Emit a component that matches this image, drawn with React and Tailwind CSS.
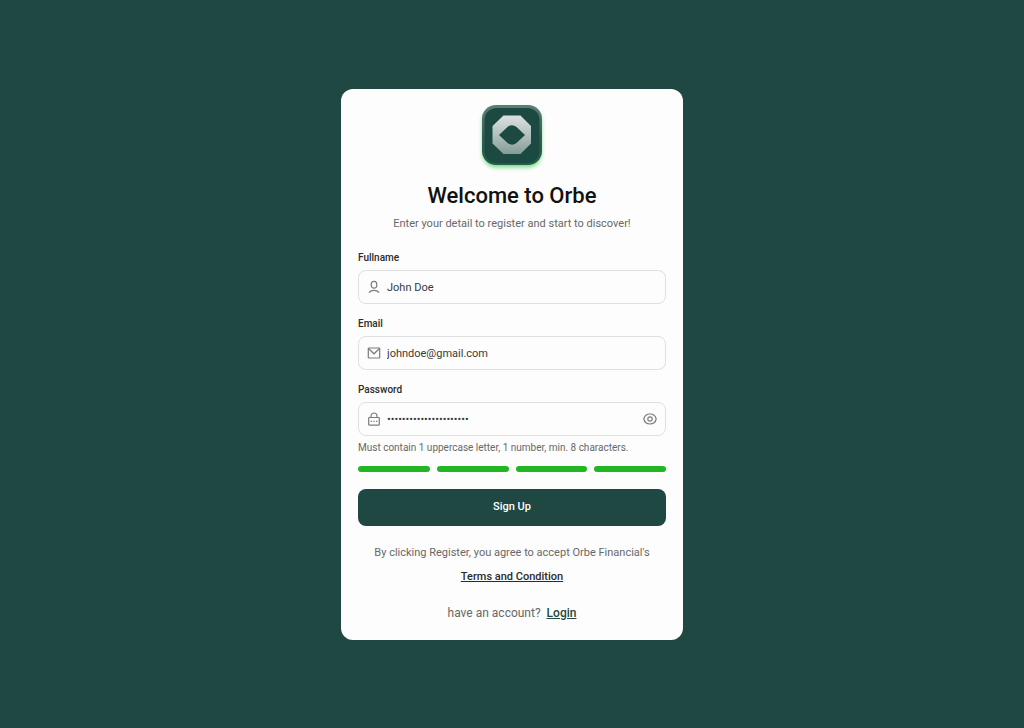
import { useState } from "react";

function Logo() {
  return (
    <svg width="80" height="80" viewBox="0 0 80 80" className="-m-[10px]" role="img" aria-label="Orbe">
      <defs>
        <linearGradient id="rim" x1="0" y1="0" x2="0" y2="1">
          <stop offset="0" stopColor="#5d7f78" />
          <stop offset="0.55" stopColor="#315c52" />
          <stop offset="1" stopColor="#215f43" />
        </linearGradient>
        <linearGradient id="ring" x1="0" y1="0" x2="0" y2="1">
          <stop offset="0" stopColor="#dce1e0" />
          <stop offset="0.5" stopColor="#b4c1be" />
          <stop offset="1" stopColor="#849c97" />
        </linearGradient>
        <filter id="glow" x="-30%" y="-30%" width="160%" height="160%">
          <feGaussianBlur stdDeviation="2" />
        </filter>
        <filter id="soft" x="-10%" y="-10%" width="120%" height="120%">
          <feGaussianBlur stdDeviation="0.6" />
        </filter>
      </defs>
      <rect x="10.500" y="13" width="59" height="59.500" rx="14" fill="#4fcf62" opacity="0.75" filter="url(#glow)" />
      <rect x="10" y="10" width="60" height="60" rx="14" fill="url(#rim)" />
      <rect x="12.500" y="13" width="55" height="55" rx="12" fill="#1f4842" filter="url(#soft)" />
      <path
        fill="url(#ring)"
        fillRule="evenodd"
        d="M31.500 20.500h17L59 31v17.500L48.500 59h-17L20.500 48.500V31ZM27 40l8.500-8q4.500-3.500 9 0l8.500 8-8.500 8q-4.500 3.500-9 0Z"
      />
    </svg>
  );
}

const iconProps = {
  width: 14,
  height: 14,
  viewBox: "0 0 14 14",
  fill: "none",
  stroke: "currentColor",
  strokeWidth: 1.2,
  className: "shrink-0",
  "aria-hidden": true,
};

function UserIcon() {
  return (
    <svg {...iconProps}>
      <path d="M7 1.300c1.700 0 2.800 1.200 2.800 2.900v.8C9.800 6.800 8.600 8.200 7 8.200S4.200 6.800 4.200 5v-.8C4.200 2.500 5.300 1.300 7 1.300Z" />
      <path d="M2 12.600c1-1.400 2.800-2.200 5-2.200s4 .8 5 2.200" />
    </svg>
  );
}

function MailIcon() {
  return (
    <svg {...iconProps}>
      <rect x="1.300" y="2" width="11.400" height="10" rx="0.500" />
      <path d="M1.500 2.500 7 7.800l5.500-5.300" />
    </svg>
  );
}

function LockIcon() {
  return (
    <svg {...iconProps}>
      <rect x="1.700" y="5.500" width="10.600" height="7.600" rx="0.500" />
      <path d="M4 5.500V4a3 3 0 0 1 6 0v1.500" />
      <path d="M3.700 9.300h1.300M6.400 9.300h1.300M9.100 9.300h1.300" />
    </svg>
  );
}

function EyeIcon() {
  return (
    <svg {...iconProps}>
      <path d="M.8 7C1.500 4 4 2 7 2s5.500 2 6.200 5c-.7 3-3.200 5-6.200 5S1.500 10 .8 7Z" />
      <circle cx="7" cy="7" r="2.200" />
    </svg>
  );
}

function Field({ id, label, icon, trailing, ...input }) {
  return (
    <div>
      <label htmlFor={id} className="block text-[10px] leading-4 font-medium text-[#2b2b2b]">
        {label}
      </label>
      <div className="mt-1 flex h-[34px] items-center gap-[6px] rounded-lg border border-[#e0e0e0] px-2 text-[#7c7c7c]">
        {icon}
        <input
          id={id}
          className="h-full min-w-0 flex-1 bg-transparent pt-0.5 text-[11px] text-[#3a3a3a] outline-none"
          {...input}
        />
        {trailing}
      </div>
    </div>
  );
}

export default function App() {
  const [visible, setVisible] = useState(false);

  return (
    <main className="flex min-h-screen items-center justify-center bg-[#1f4842] font-[Roboto,sans-serif]">
      <form
        className="w-full max-w-[342px] rounded-xl bg-[#fdfdfd] px-[17px] pt-4 pb-[15px]"
        onSubmit={(e) => e.preventDefault()}
      >
        <div className="flex flex-col items-center text-center">
          <Logo />
          <h1 className="mt-[14px] text-[22px] leading-[34px] font-medium text-[#111111]">Welcome to Orbe</h1>
          <p className="text-[11px] leading-[22px] text-[#686868]">
            Enter your detail to register and start to discover!
          </p>
        </div>

        <div className="mt-[15px] flex flex-col gap-3">
          <Field id="fullname" label="Fullname" type="text" defaultValue="John Doe" icon={<UserIcon />} />
          <Field id="email" label="Email" type="email" defaultValue="johndoe@gmail.com" icon={<MailIcon />} />
          <Field
            id="password"
            label="Password"
            type={visible ? "text" : "password"}
            defaultValue="Orbefinancial2024pass1"
            icon={<LockIcon />}
            trailing={
              <button type="button" aria-label="Show password" onClick={() => setVisible(!visible)}>
                <EyeIcon />
              </button>
            }
          />
        </div>

        <p className="mt-1 text-[10px] leading-4 text-[#686868]">
          Must contain 1 uppercase letter, 1 number, min. 8 characters.
        </p>
        <div className="mt-[10px] grid grid-cols-4 gap-[7px]">
          <span className="h-[6px] rounded-full bg-[#22b722]" />
          <span className="h-[6px] rounded-full bg-[#22b722]" />
          <span className="h-[6px] rounded-full bg-[#22b722]" />
          <span className="h-[6px] rounded-full bg-[#22b722]" />
        </div>

        <button type="submit" className="mt-[17px] h-[37px] w-full rounded-lg bg-[#1f4842] text-[11px] font-medium text-white">
          Sign Up
        </button>

        <p className="mt-[15px] text-center text-[11px] leading-6 text-[#686868]">
          By clicking Register, you agree to accept Orbe Financial's
          <br />
          <a href="#terms" className="font-medium text-[#2b2b2b] underline">
            Terms and Condition
          </a>
        </p>
        <p className="mt-3 flex justify-center gap-[6px] text-xs leading-6 text-[#686868]">
          have an account?
          <a href="#login" className="font-medium text-[#1f4842] underline">
            Login
          </a>
        </p>
      </form>
    </main>
  );
}
